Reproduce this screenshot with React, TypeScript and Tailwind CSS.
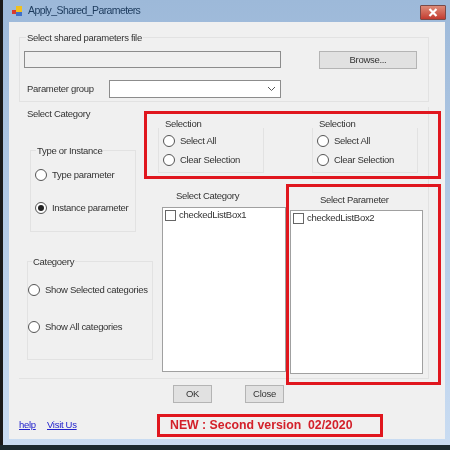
import React from "react";

function Radio({ checked, label, className = "" }: { checked?: boolean; label: string; className?: string }) {
  return (
    <div className={"h-[12px] flex items-center gap-[5px] whitespace-nowrap leading-[12px] " + className}>
      <span className="w-[12px] h-[12px] rounded-full border border-[#555] bg-white flex items-center justify-center shrink-0">
        {checked && <span className="w-[6px] h-[6px] rounded-full bg-[#222]" />}
      </span>
      <span>{label}</span>
    </div>
  );
}

function Group({ title, className = "", titleClass = "", children }: { title: string; className?: string; titleClass?: string; children?: React.ReactNode }) {
  return (
    <div className={"relative border border-[#e2e2e2] " + className}>
      <span className={"absolute bg-[#f0f0f0] px-[1px] leading-[13px] whitespace-nowrap " + titleClass}>{title}</span>
      {children}
    </div>
  );
}

function ListBox({ label, className = "" }: { label: string; className?: string }) {
  return (
    <div className={"bg-white border border-[#a0a0a0] flex items-start gap-[3px] pl-[2px] pt-[2px] " + className}>
      <span className="w-[11px] h-[11px] border border-[#666] bg-white shrink-0" />
      <span className="leading-[10px]">{label}</span>
    </div>
  );
}

function Btn({ label, className = "" }: { label: string; className?: string }) {
  return (
    <div className={"h-[18px] bg-[#e1e1e1] border border-[#b4b4b4] flex items-center justify-center " + className}>{label}</div>
  );
}

export default function App() {
  return (
    <div className="w-[450px] h-[450px] overflow-hidden bg-[#1b2a30] font-['Liberation_Sans',sans-serif] text-[9.5px] tracking-[-0.3px] text-[#333] blur-[0.35px]">
      <div className="w-[450px] h-[445px] border-l-[3px] border-[#1a1a1a] bg-gradient-to-b from-[#9db9d9] via-[#b4cbe6] to-[#c9dcf2] flex flex-col">
        {/* title bar */}
        <div className="h-[22px] shrink-0 flex items-center pl-[9px] pr-[4px]">
          <svg width="11" height="11" viewBox="0 0 11 11" className="shrink-0">
            <rect x="0" y="4" width="4" height="4" fill="#d83a2e" />
            <rect x="4" y="0" width="6" height="6" fill="#f0c020" />
            <rect x="4" y="6" width="6" height="4" fill="#4070c8" />
          </svg>
          <span className="ml-[5px] text-[10.5px] tracking-[-0.6px] text-[#1c3a5c]">Apply_Shared_Parameters</span>
          <div className="ml-auto mt-[3px] w-[26px] h-[15px] border border-[#7a4a48] rounded-[1px] bg-gradient-to-b from-[#dd8a78] to-[#c23a30] flex items-center justify-center">
            <svg width="10" height="9" viewBox="0 0 10 9">
              <path d="M1.5 1 L8.5 8 M8.5 1 L1.5 8" stroke="#fff" strokeWidth="2.2" />
            </svg>
          </div>
        </div>

        {/* client area */}
        <div className="ml-[6px] w-[436px] h-[417px] bg-[#f0f0f0] flex flex-col pt-[15px] pl-[10px]">
          {/* file group */}
          <Group title="Select shared parameters file" titleClass="left-[6px] top-[-7px]" className="w-[410px] h-[65px] shrink-0">
            <div className="flex items-start pl-[4px] pt-[13px]">
              <div className="w-[257px] h-[17px] bg-[#f0f0f0] border border-[#8c8c8c]" />
              <Btn label="Browse..." className="ml-[38px] w-[98px]" />
            </div>
            <div className="flex items-center pl-[7px] mt-[11px]">
              <span className="w-[82px]">Parameter group</span>
              <div className="w-[172px] h-[18px] bg-white border border-[#8c8c8c] flex items-center justify-end pr-[4px]">
                <svg width="9" height="6" viewBox="0 0 9 6"><path d="M1 1 L4.5 4.5 L8 1" fill="none" stroke="#555" strokeWidth="1" /></svg>
              </div>
            </div>
          </Group>

          {/* category group */}
          <div className="mt-[5px] w-[410px] h-[272px] shrink-0 border-b border-r border-[#e2e2e2] flex">
            <div className="w-[125px] shrink-0 flex flex-col">
              <span className="ml-[8px] leading-[13px]">Select Category</span>
              <Group title="Type or Instance" titleClass="left-[5px] top-[-7px]" className="ml-[11px] mt-[30px] w-[106px] h-[82px] shrink-0">
                <Radio label="Type parameter" className="ml-[4px] mt-[18px]" />
                <Radio checked label="Instance parameter" className="ml-[4px] mt-[21px]" />
              </Group>
              <Group title="Categoery" titleClass="left-[4px] top-[-7px]" className="ml-[8px] mt-[29px] w-[126px] h-[99px] shrink-0">
                <Radio label="Show Selected categories" className="mt-[22px]" />
                <Radio label="Show All categories" className="mt-[25px]" />
              </Group>
            </div>
            <div className="flex flex-col shrink-0">
              <div className="w-[297px] h-[68px] mt-[4px] border-[3px] border-[#e0161e] flex pl-[11px] shrink-0">
                <Group title="Selection" titleClass="left-[5px] top-[-11px]" className="w-[106px] h-[45px] mt-[14px] border-t-0 shrink-0">
                  <Radio label="Select All" className="ml-[4px] mt-[7px]" />
                  <Radio label="Clear Selection" className="ml-[4px] mt-[7px]" />
                </Group>
                <Group title="Selection" titleClass="left-[5px] top-[-11px]" className="ml-[48px] w-[106px] h-[45px] mt-[14px] border-t-0 shrink-0">
                  <Radio label="Select All" className="ml-[4px] mt-[7px]" />
                  <Radio label="Clear Selection" className="ml-[4px] mt-[7px]" />
                </Group>
              </div>
              <div className="flex">
                <div className="flex flex-col w-[142px] shrink-0">
                  <span className="ml-[32px] mt-[10px] leading-[13px]">Select Category</span>
                  <ListBox label="checkedListBox1" className="ml-[18px] mt-[5px] w-[124px] h-[165px]" />
                </div>
                <div className="w-[155px] h-[201px] mt-[5px] border-[3px] border-[#e0161e] flex flex-col shrink-0">
                  <span className="ml-[31px] mt-[6px] leading-[13px]">Select Parameter</span>
                  <ListBox label="checkedListBox2" className="ml-[1px] mt-[4px] w-[133px] h-[164px]" />
                </div>
              </div>
            </div>
          </div>

          {/* buttons */}
          <div className="flex mt-[6px] shrink-0">
            <Btn label="OK" className="ml-[154px] w-[39px]" />
            <Btn label="Close" className="ml-[33px] w-[39px]" />
          </div>

          {/* footer */}
          <div className="flex items-center mt-[11px] shrink-0">
            <span className="text-[#2222cc] underline w-[28px]">help</span>
            <span className="text-[#2222cc] underline w-[110px]">Visit Us</span>
            <div className="w-[226px] h-[23px] border-[3px] border-[#e0161e] flex items-center pl-[10px] text-[12.3px] tracking-normal font-bold text-[#d3202a] whitespace-pre">
              NEW : Second version  02/2020
            </div>
          </div>
        </div>
      </div>
    </div>
  );
}
